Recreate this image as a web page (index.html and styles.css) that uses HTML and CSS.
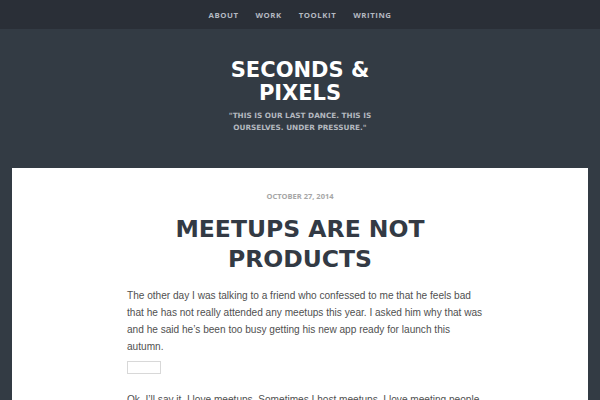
FILE: index.html
```html
<!DOCTYPE html>
<html>
<head>
<meta charset="utf-8">
<link rel="stylesheet" href="styles.css">
</head>
<body>
<nav class="topnav">
  <a href="#">About</a>
  <a href="#">Work</a>
  <a href="#">Toolkit</a>
  <a href="#">Writing</a>
</nav>
<header class="masthead">
  <h1 class="site-title">Seconds &amp;<br>Pixels</h1>
  <p class="tagline">"This is our last dance. This is<br>ourselves. Under pressure."</p>
</header>
<main class="card">
  <div class="date">October 27, 2014</div>
  <h2 class="post-title">Meetups are not<br>products</h2>
  <div class="post-body">
    <p>The other day I was talking to a friend who confessed to me that he feels bad that he has not really attended any meetups this year. I asked him why that was and he said he’s been too busy getting his new app ready for launch this autumn.</p>
    <div class="embed"></div>
    <p>Ok, I’ll say it. I love meetups. Sometimes I host meetups. I love meeting people and talking about what they are doing.</p>
  </div>
</main>
</body>
</html>
```
FILE: styles.css
```css
html, body {
  margin: 0;
  padding: 0;
  background: #333b44;
  height: 400px;
  overflow: hidden;
}
.topnav {
  height: 29px;
  background: #2a2f37;
  display: flex;
  justify-content: center;
  align-items: center;
  gap: 17px;
}
.topnav a {
  font-family: "Open Sans", "DejaVu Sans", sans-serif;
  font-weight: 700;
  font-size: 7.8px;
  letter-spacing: 0.55px;
  text-transform: uppercase;
  color: #b4b9c1;
  text-decoration: none;
}
.masthead {
  text-align: center;
  padding: 30px 0 0;
  height: 109px;
}
.site-title {
  margin: 0;
  font-family: "DejaVu Sans", sans-serif;
  font-weight: 700;
  font-size: 21px;
  line-height: 23px;
  text-transform: uppercase;
  color: #ffffff;
}
.tagline {
  margin: 5px 0 0;
  font-family: "DejaVu Sans", sans-serif;
  font-weight: 700;
  font-size: 7.3px;
  line-height: 12px;
  text-transform: uppercase;
  color: #b3b8bf;
}
.card {
  margin: 0 12px;
  background: #ffffff;
  padding: 23px 104px 0 115px;
  height: 300px;
}
.date {
  text-align: center;
  padding-right: 11px;
  font-family: "Open Sans", sans-serif;
  font-weight: 700;
  font-size: 7.5px;
  color: #a6a6a6;
  text-transform: uppercase;
  line-height: 10px;
}
.post-title {
  margin: 13px 11px 0 0;
  text-align: center;
  font-family: "DejaVu Sans", sans-serif;
  font-weight: 700;
  font-size: 23.5px;
  line-height: 30px;
  text-transform: uppercase;
  color: #333a44;
}
.post-body {
  margin-top: 13px;
  font-family: "Liberation Sans", Arial, sans-serif;
  font-size: 10.1px;
  line-height: 17px;
  color: #505050;
}
.post-body p {
  margin: 0;
}
.embed {
  width: 32px;
  height: 11px;
  border: 1px solid #d8d8d8;
  margin: 6px 0 17px;
}
```
